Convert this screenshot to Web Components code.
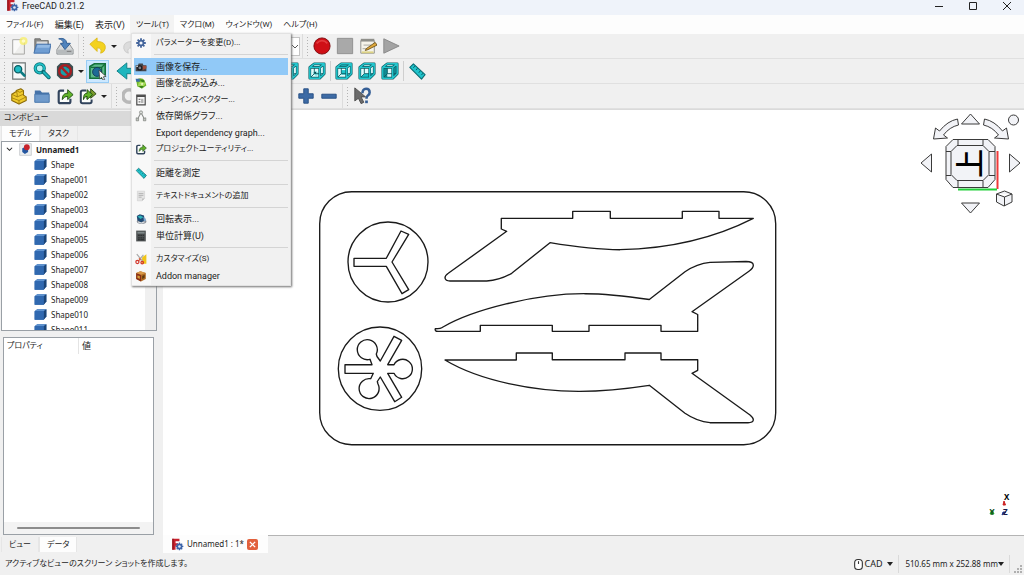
<!DOCTYPE html>
<html lang="ja">
<head>
<meta charset="utf-8">
<meta name="viewport" content="width=device-width, initial-scale=1">
<title>FreeCAD 0.21.2</title>
<style>
  html, body { margin: 0; height: 100%; }
  body {
    font-family: Roboto, "Noto Sans CJK JP", sans-serif;
    font-size: 9px; line-height: 12px; color: #1c1c1c;
    font-feature-settings: "palt"; background: #f0f0f0; overflow: hidden;
  }
</style>
</head>
<body>
<fc-window>
  <fc-titlebar slot="title">FreeCAD 0.21.2</fc-titlebar>

  <fc-menubar slot="menubar">
    <fc-menu label="ファイル(F)" kana></fc-menu>
    <fc-menu label="編集(E)"></fc-menu>
    <fc-menu label="表示(V)"></fc-menu>
    <fc-menu label="ツール(T)" kana open>
      <fc-menu-item icon="gear" kana>パラメーターを変更(D)...</fc-menu-item>
      <fc-menu-sep></fc-menu-sep>
      <fc-menu-item icon="camera" active>画像を保存...</fc-menu-item>
      <fc-menu-item icon="loadimage">画像を読み込み...</fc-menu-item>
      <fc-menu-item icon="scene" kana>シーンインスペクター...</fc-menu-item>
      <fc-menu-item icon="graph">依存関係グラフ...</fc-menu-item>
      <fc-menu-item>Export dependency graph...</fc-menu-item>
      <fc-menu-item icon="link" kana>プロジェクトユーティリティ...</fc-menu-item>
      <fc-menu-sep></fc-menu-sep>
      <fc-menu-item icon="ruler">距離を測定</fc-menu-item>
      <fc-menu-sep></fc-menu-sep>
      <fc-menu-item icon="textdoc" kana>テキストドキュメントの追加</fc-menu-item>
      <fc-menu-sep></fc-menu-sep>
      <fc-menu-item icon="turntable">回転表示...</fc-menu-item>
      <fc-menu-item icon="calc">単位計算(U)</fc-menu-item>
      <fc-menu-sep></fc-menu-sep>
      <fc-menu-item icon="customize" kana>カスタマイズ(S)</fc-menu-item>
      <fc-menu-item icon="addon">Addon manager</fc-menu-item>
    </fc-menu>
    <fc-menu label="マクロ(M)" kana></fc-menu>
    <fc-menu label="ウィンドウ(W)" kana></fc-menu>
    <fc-menu label="ヘルプ(H)" kana></fc-menu>
  </fc-menubar>

  <fc-toolrow slot="toolbars">
    <fc-toolbar>
      <fc-tool icon="new"></fc-tool><fc-tool icon="open"></fc-tool><fc-tool icon="save"></fc-tool>
    </fc-toolbar>
    <fc-toolbar>
      <fc-tool icon="undo" drop></fc-tool><fc-tool icon="redo" drop></fc-tool>
    </fc-toolbar>
    <fc-toolbar><fc-workbench></fc-workbench></fc-toolbar>
    <fc-toolbar last>
      <fc-tool icon="record"></fc-tool><fc-tool icon="stop"></fc-tool><fc-tool icon="macro"></fc-tool><fc-tool icon="play"></fc-tool>
    </fc-toolbar>
  </fc-toolrow>
  <fc-toolrow slot="toolbars">
    <fc-toolbar last>
      <fc-tool icon="fit"></fc-tool><fc-tool icon="zoom"></fc-tool><fc-tool icon="nodraw" drop></fc-tool><fc-tool icon="bbox" checked></fc-tool>
      <fc-tool-sep></fc-tool-sep>
      <fc-tool icon="back"></fc-tool><fc-tool icon="forward"></fc-tool><fc-tool icon="link"></fc-tool>
      <fc-tool-sep></fc-tool-sep>
      <fc-tool icon="cubeFront"></fc-tool><fc-tool icon="cubeTop"></fc-tool><fc-tool icon="cubeRight"></fc-tool><fc-tool icon="cubeFront"></fc-tool>
      <fc-tool icon="cubeFront"></fc-tool><fc-tool-sep></fc-tool-sep><fc-tool icon="cubeIso"></fc-tool>
      <fc-tool-sep line></fc-tool-sep>
      <fc-tool icon="cubeTop"></fc-tool><fc-tool icon="cubeBottom"></fc-tool><fc-tool icon="cubeRight"></fc-tool>
      <fc-tool-sep line></fc-tool-sep>
      <fc-tool icon="ruler"></fc-tool>
    </fc-toolbar>
  </fc-toolrow>
  <fc-toolrow slot="toolbars">
    <fc-toolbar>
      <fc-tool icon="part"></fc-tool><fc-tool icon="folder"></fc-tool><fc-tool icon="link"></fc-tool><fc-tool icon="links" drop></fc-tool>
    </fc-toolbar>
    <fc-toolbar>
      <fc-tool icon="ring"></fc-tool><fc-tool icon="ring"></fc-tool><fc-tool icon="ring" drop></fc-tool><fc-tool icon="ring"></fc-tool><fc-tool icon="ring"></fc-tool><fc-tool icon="ring"></fc-tool><fc-tool icon="ring"></fc-tool>
      <fc-tool-sep></fc-tool-sep>
      <fc-tool icon="plus"></fc-tool><fc-tool icon="minus"></fc-tool>
    </fc-toolbar>
    <fc-toolbar last><fc-tool icon="whats"></fc-tool></fc-toolbar>
  </fc-toolrow>

  <fc-combo-view slot="side"></fc-combo-view>
  <fc-viewport slot="main"></fc-viewport>
  <fc-statusbar slot="status">アクティブなビューのスクリーン ショットを作成します。</fc-statusbar>
</fc-window>

<script>
const K = '#0c5c63';
/* Wireframe cube with one face filled. */
const cube = face => {
  const faces = {
    front: '<path d="M3 7h10v11H3z" fill="#1cc3ca"/>',
    top: '<path d="M2 6l5-4h11l-5 4z" fill="#1cc3ca"/><path d="M7 9h5v5H7z" fill="#1cc3ca"/>',
    right: '<path d="M13 6l5-4v11l-5 5z" fill="#128c93"/><path d="M2 6h5v11H2z" fill="#128c93"/>',
    bottom: '<path d="M2 18l5-5h11l-5 5z" fill="#1cc3ca"/>',
    iso: '<path d="M5 12l4-2 4 3-4 3z" fill="#8feaec"/><circle cx="8" cy="12" r="1.200" fill="#0b4a50"/>'
  };
  const edges = 'M2 6l5-4h11v11l-5 5H2zM2 6h11v12M13 6l5-4';
  return `<path d="M2 6l5-4h11v11l-5 5H2z" fill="#e2fbfb"/>${faces[face]}
    <path d="M7 6v7H13M7 13l-4 4M13 13h4" fill="none" stroke="${K}" stroke-width="1"/>
    <path d="${edges}" fill="none" stroke="${K}" stroke-width="3" stroke-linejoin="round"/>
    <path d="${edges}" fill="none" stroke="#22c6cd" stroke-width="1.600" stroke-linejoin="round"/>`;
};
const ICONS = {
  app: '<path d="M2 1h11v4H7v3h4v4H7v6H2z" fill="#c8202c"/><path d="M2 1h2v17H2z" fill="#8e121c"/><g fill="#3c64a8"><circle cx="13" cy="13" r="4.6"/><path d="M12 7h2v12h-2zM7 12h12v2H7z"/><path d="M12 7h2v12h-2zM7 12h12v2H7z" transform="rotate(45 13 13)"/></g><circle cx="13" cy="13" r="2" fill="#dfe8f6"/>',
  gear: '<g fill="#44659c"><circle cx="10" cy="10" r="5.500"/><path d="M8.500 2h3v16h-3zM2 8.500h16v3H2z"/><path d="M8.500 2h3v16h-3zM2 8.500h16v3H2z" transform="rotate(45 10 10)"/></g><circle cx="10" cy="10" r="2.600" fill="#f4f6fa"/>',
  camera: '<path d="M1 7h4l1-3h7l1 3h5v10H1z" fill="#43454a"/><circle cx="8" cy="11.500" r="4.500" fill="#1c1d20"/><circle cx="8" cy="11.500" r="2.200" fill="#7a828f"/><path d="M13 8h6v4l-6 3z" fill="#a14f3c"/><path d="M2 8h3v2H2z" fill="#c9c9c9"/>',
  loadimage: '<path d="M2 6q4-6 11-3l3 3 3 8-7 5-8-3z" fill="#6fb52a"/><path d="M6 9l9-3 3 5-5 6-8-2z" fill="#a5d957"/><path d="M1 3h7v5H2z" fill="#3c6ea8"/><path d="M8 4l7 1 1 4-5-1z" fill="#37801a"/><path d="M6 15l9 0-4 4z" fill="#37801a"/><path d="M9 11l5-1-2 4z" fill="#eef9cf"/>',
  scene: '<path d="M3 2h14v16H3z" fill="#f6f6f6" stroke="#4a4a4a" stroke-width="2"/><path d="M3 2h14v3H3z" fill="#4a4a4a"/><path d="M6 8h3v2H6zM6 12h3v2H6z" fill="#777"/><path d="M10 8h4v7h-4z" fill="#b5b5b5"/>',
  graph: '<path d="M10 4L4 16M10 4l6 12" stroke="#8a8d8a" stroke-width="1.800"/><circle cx="10" cy="4" r="2.600" fill="#dcdedb" stroke="#6d706c"/><path d="M2 13l4 1v4H2zM14 14l4-1v5h-4z" fill="#c4c7c2" stroke="#6d706c"/>',
  link: '<path d="M9 4H5Q3 4 3 6v10q0 2 2 2h9q2 0 2-2v-3" fill="#fbfdfb" stroke="#31435c" stroke-width="2.400"/><path d="M7 14c0-5 2-7 6-7V3l6 5.500L13 14v-3.500c-3 0-4 1-6 3.500z" fill="#62b52b" stroke="#1c4a10" stroke-width="1"/>',
  links: '<path d="M8 4H4Q2 4 2 6v10q0 2 2 2h8q2 0 2-2v-2" fill="#fbfdfb" stroke="#31435c" stroke-width="2.200"/><path d="M9 13c0-5 1-7 4-7V2l6 5.500-6 5v-3c-2 0-3 1-4 3.500z" fill="#7a9a2b" stroke="#24440f"/><path d="M5 14c0-5 1-7 4-7V3l6 5.500L9 14v-3.500c-2 0-3 1-4 3.500z" fill="#62b52b" stroke="#1c4a10"/>',
  ruler: '<path d="M2 6l4-4 13 12-4 5z" fill="#1fc3cb" stroke="#0a6b72" stroke-width="1.200" stroke-linejoin="round"/><path d="M7.500 4.500L6 6.500M10.500 7L9 9M13.500 10l-1.500 2M16.500 12.500l-1.500 2" stroke="#0a565c" stroke-width="1"/>',
  textdoc: '<path d="M4 2h12v12l-4 4H4z" fill="#e4e4e4" stroke="#cfcfcf"/><path d="M6 6h8M6 9h8M6 12h5" stroke="#a9a9a9" stroke-width="1.300"/><path d="M12 18v-4h4z" fill="#b9b9b9"/>',
  turntable: '<ellipse cx="11" cy="14" rx="8" ry="4" fill="#8a9099"/><path d="M3 5l5-3 7 2 1 8-6 4-6-4z" fill="#204a73"/><path d="M4 6l5-2 5 3-5 3z" fill="#2fb3bb"/><path d="M14 7q5 1 4 6l-3 1z" fill="#7fa7cf"/><path d="M5 15q6 3 11 0" stroke="#e9edf2" stroke-width="1.500" fill="none"/>',
  calc: '<path d="M2 1h16v18H2z" fill="#4d5152"/><path d="M4 3h12v3H4z" fill="#7f8889"/><path d="M5 8h3v2H5zM9 8h3v2H9zM13 8h2v2h-2zM5 12h3v2H5zM9 12h3v2H9zM13 12h2v2h-2zM5 15h3v2H5zM9 15h6v2H9z" fill="#303334"/>',
  customize: '<path d="M12 7l7-5v16h-8z" fill="#f0c419"/><path d="M3 2l10 12M14 3L5 14" stroke="#a8a8a8" stroke-width="2"/><circle cx="4" cy="15" r="2.600" fill="none" stroke="#d3352a" stroke-width="2"/><circle cx="12" cy="16" r="2.200" fill="none" stroke="#d3352a" stroke-width="2"/><path d="M6 8l4 2-2 4z" fill="#e4572e"/>',
  addon: '<path d="M2 5l7-3 9 3v10l-8 4-8-4z" fill="#b06a22"/><path d="M2 5l8 3v11l-8-4z" fill="#8b2f16"/><path d="M2 5l7-3 9 3-8 3z" fill="#d99a4a"/><path d="M4 9l4 1v5l-4-2z" fill="#d8a13b"/><path d="M12 10l4-2v5l-4 2z" fill="#5f3a12"/>',
  new: '<path d="M3 3h13v16H3z" fill="#efefed" stroke="#a2a29e"/><path d="M4 4h11L5 18H4z" fill="#fafaf9"/><circle cx="15" cy="4.500" r="4.500" fill="#f8ef6a" opacity=".8"/><circle cx="15" cy="4.500" r="2" fill="#fffbc8"/>',
  open: '<path d="M2 17V2h6l1 2h8v6z" fill="#8a8a88" stroke="#6d6d6b"/><path d="M4 5h12v6H4z" fill="#dcdcdc"/><path d="M4 8h16l-2 10H1z" fill="#6f9dd2" stroke="#3f6ea8"/><path d="M5 9h14l-1 3H4z" fill="#93bae4"/>',
  save: '<path d="M5 8h10l4 6v5H1v-5z" fill="#d8dadb" stroke="#868a8c"/><path d="M2 14h16v4H2z" fill="#b6babc"/><path d="M3 2q8-2 9 5h4l-6 7-5-7h3q0-4-5-5z" fill="#4f83bd" stroke="#2d5a91"/><path d="M12 16h5" stroke="#777"/>',
  undo: '<path d="M1 8l8-7v4q10 0 9 8-1 4-5 5 2-6-4-6v4z" fill="#f3d21f" stroke="#dcb91a"/>',
  redo: '<path d="M19 8l-8-7v4Q1 5 2 13q1 4 5 5-2-6 4-6v4z" fill="#dcdcdc" stroke="#cacaca"/>',
  record: '<circle cx="10" cy="10" r="9" fill="#cf0f16" stroke="#7d070b" stroke-width="1"/><path d="M4 7q6-6 12 0" stroke="#e23a3e" fill="none" stroke-width="2"/>',
  stop: '<path d="M1.500 1.500h17v17h-17z" fill="#a9a9a9" stroke="#8c8c8c"/>',
  macro: '<path d="M2 4h15v14H2z" fill="#f5f3ea" stroke="#8b8b86"/><path d="M2 2h15v3H2z" fill="#8f8f8a"/><path d="M5 9h9M4 13h8" stroke="#a4a49c"/><path d="M8 13l10-7 2 3-10 5-3 1z" fill="#e1a93a" stroke="#6e5218"/><path d="M3 16h13v2H3z" fill="#dcd284"/>',
  play: '<path d="M2 2l17 8-17 8z" fill="#a3a3a3" stroke="#868686"/>',
  fit: '<path d="M3 1h14v18H3z" fill="#f7f9f9" stroke="#6f7676" stroke-width="1.300"/><circle cx="9" cy="8" r="4" fill="#21bcc4" stroke="#0b5d63" stroke-width="1.500"/><path d="M12 11l4 4" stroke="#0d7b82" stroke-width="3" stroke-linecap="round"/>',
  zoom: '<circle cx="7.500" cy="7" r="5" fill="#bdf0f1" stroke="#0b7379" stroke-width="3.600"/><circle cx="7.500" cy="7" r="5" fill="none" stroke="#1fc0c7" stroke-width="2"/><path d="M11.500 11l6 6" stroke="#0b656b" stroke-width="4.200" stroke-linecap="round"/><path d="M12 11.500l5.500 5.500" stroke="#1cb5bd" stroke-width="2.400" stroke-linecap="round"/>',
  nodraw: '<path d="M5 1h10l4 4v10l-4 4H5l-4-4V5z" fill="#3a4f52"/><path d="M5 8l5-3 5 3v5l-5 3-5-3z" fill="#17a0a8"/><circle cx="10" cy="10" r="6.500" fill="none" stroke="#a81e22" stroke-width="2.600"/><path d="M5.500 5.500l9 9" stroke="#a81e22" stroke-width="2.600"/>',
  bbox: '<path d="M1 5l5-3h12v12l-4 4H1z" fill="#5cba8c" stroke="#12703a" stroke-width="1.800"/><path d="M2 6h12v12M14 6l4-4" stroke="#12703a" fill="none" stroke-width="1.500"/><circle cx="9" cy="11" r="5" fill="#1d6a96" stroke="#123a5c"/><path d="M11 9l8 7-3 .5 1.500 3-2 .5-1.500-3-2 2z" fill="#f5f5f5" stroke="#333" stroke-width=".8"/>',
  back: '<path d="M1 10l11-9v6h8v6h-8v6z" fill="#1fb6be" stroke="#0a7c82"/>',
  forward: '<path d="M19 10L8 1v6H0v6h8v6z" fill="#1fb6be" stroke="#0a7c82"/>',
  cubeFront: cube('front'), cubeTop: cube('top'), cubeRight: cube('right'), cubeBottom: cube('bottom'), cubeIso: cube('iso'),
  part: '<path d="M2 8l5-3v-1l5-2 3 2v5l3 2v4l-8 4-8-4z" fill="#f0cb2c" stroke="#8a6a08" stroke-width="1.200" stroke-linejoin="round"/><path d="M2 8l6 3 7-3M10 19v-4l8-4M2 12l8 3M8 11V8l-1-4 4 2 4-2" fill="none" stroke="#a3800e" stroke-width="1"/>',
  folder: '<path d="M2 4h6l2 2h8v11H2z" fill="#4572a8"/><path d="M2 8h16v9H2z" fill="#6f9acb" stroke="#4a78ae"/>',
  ring: '<circle cx="8" cy="10" r="7" fill="none" stroke="#b8b8b8" stroke-width="4"/>',
  plus: '<path d="M7.500 2h5v5.500H18v5h-5.500V18h-5v-5.500H2v-5h5.500z" fill="#3d6ba5" stroke="#244d82"/>',
  minus: '<path d="M2 8h16v4.500H2z" fill="#3d6ba5" stroke="#244d82"/>',
  whats: '<path d="M2 1l12 10H9l3 6-3 1.500-3-6-4 3z" fill="#6b6b6b" stroke="#4c4c4c"/><path d="M10.500 7q0-5 4-5t4 4q0 2-2 3.500-1.500 1-1.500 3.500" fill="none" stroke="#365f96" stroke-width="2.800"/><path d="M13.500 15h3v3h-3z" fill="#365f96"/>',
  doc: '<path d="M1 1h18v18H1z" fill="#eceef0" stroke="#b8bcc0"/><path d="M5 8l5-2 4 2v6l-5 3-4-3z" fill="#2457a0"/><circle cx="12" cy="6.500" r="4.500" fill="#c8242c"/>',
  box: '<path d="M1 5l4-3h14v11l-4 5H1z" fill="#2a5fa3"/><path d="M1 5l4-3h14l-4 3z" fill="#5f93cf"/><path d="M15 5l4-3v11l-4 5z" fill="#1b4577"/><path d="M1 5h14v13H1z" fill="#3069b0"/>',
  mouse: '<rect x="3" y="1" width="14" height="18" rx="6" fill="#fff" stroke="#333" stroke-width="2"/><path d="M10 4v5" stroke="#333" stroke-width="2"/>'
};

/* Base class: each element renders its template into an open shadow root. */
class Base extends HTMLElement {
  constructor() { super(); this.attachShadow({ mode: 'open' }); }
  connectedCallback() {
    const t = document.createElement('template');
    t.innerHTML = `<style>*,:host{box-sizing:border-box}:host([kana]){font-size:8px}button{font:inherit;color:inherit;background:none;border:0;padding:0;margin:0;white-space:nowrap;text-align:left;font-feature-settings:inherit}${this.css()}</style>${this.html()}`;
    this.shadowRoot.replaceChildren(t.content.cloneNode(true));
  }
  a(n) { return this.getAttribute(n) || ''; }
}
const def = (name, css, html) => customElements.define(name, class extends Base {
  css() { return css; }
  html() { return typeof html === 'function' ? html(this) : html; }
});

def('fc-icon', ':host{display:block;width:var(--icon,18px);height:var(--icon,18px);flex:none}svg{display:block;width:100%;height:100%}',
  e => `<svg viewBox="0 0 20 20" aria-hidden="true">${ICONS[e.a('name')] || ''}</svg>`);

def('fc-window', `
  :host{display:grid;height:100vh;grid-template:auto auto auto minmax(0,1fr) 22px / 157px minmax(0,1fr);column-gap:6px}
  .title,.menus,.tools,.status{grid-column:1/-1;min-width:0}
  .menus{position:relative;z-index:2}
  .tools{border-bottom:1px solid #dadada}
  .side,.main{min-height:0;min-width:0;display:grid}`,
  `<header class="title"><slot name="title"></slot></header>
   <nav class="menus"><slot name="menubar"></slot></nav>
   <div class="tools"><slot name="toolbars"></slot></div>
   <aside class="side"><slot name="side"></slot></aside>
   <main class="main"><slot name="main"></slot></main>
   <footer class="status"><slot name="status"></slot></footer>`);

def('fc-titlebar', `
  :host{display:flex;align-items:center;height:15px;background:#eff3fa;padding:0 0 4px 6px;--icon:13px}
  span{flex:1;padding-left:3px}
  button{width:34px;height:11px;display:grid;place-items:center}
  svg{width:10px;height:10px;fill:none;stroke:#222}`,
  `<fc-icon name="app"></fc-icon><span><slot></slot></span>
   <button aria-label="最小化"><svg viewBox="0 0 10 10"><path d="M1 5.500h8"/></svg></button>
   <button aria-label="最大化"><svg viewBox="0 0 10 10"><path d="M1.500 1.500h7v7h-7z"/></svg></button>
   <button aria-label="閉じる"><svg viewBox="0 0 10 10"><path d="M1 1l8 8M9 1l-8 8"/></svg></button>`);

def('fc-menubar', ':host{display:flex;height:19px;background:#fdfdfd}', '<slot></slot>');

def('fc-menu', `
  :host{display:block;position:relative}
  button{height:19px;padding:0 5px 0 6px;display:block}
  :host([open]) button{background:#f3f3f3}
  .popup{position:absolute;top:18px;left:1px;width:160px;height:253px;display:flex;flex-direction:column;font-size:9px;
    background:linear-gradient(90deg,#f8f8f8 19px,#f1f1f1 19px);border:1px solid #e2e2e2;padding:1px 2px;box-shadow:1px 1px 2px #707070}`,
  e => `<button aria-haspopup="menu">${e.a('label')}</button>${e.hasAttribute('open') ? '<div class="popup" role="menu"><slot></slot></div>' : ''}`);

def('fc-menu-item', `
  :host{display:flex;flex:1;min-height:0;font-size:9px;--icon:12px}
  button{flex:1;display:flex;align-items:center}
  .ico{width:22px;padding-left:1px;flex:none}
  :host([active]){background:#91c9f7}`,
  e => `<button role="menuitem"><span class="ico">${e.a('icon') ? `<fc-icon name="${e.a('icon')}"></fc-icon>` : ''}</span><span><slot></slot></span></button>`);

def('fc-menu-sep', ':host{display:block;flex:none;height:7px;padding:3px 0 0 20px}i{display:block;height:1px;background:#d4d4d4}', '<i></i>');

def('fc-toolrow', ':host{display:flex;height:25px;background:#f0f0f0;border-bottom:1px solid #e0e0e0}', '<slot></slot>');

def('fc-toolbar', `
  :host{display:flex;align-items:center;padding-right:2px;border-right:1px solid #dcdcdc}
  :host([last]){border-right:0}
  .grip{width:3px;height:20px;margin:0 1px 0 3px;flex:none;background:radial-gradient(circle,#b4b4b4 1px,transparent 1px) 0 0/3px 3px}`,
  '<span class="grip"></span><slot></slot>');

def('fc-tool', `
  :host{display:flex;align-items:center;flex:none}
  .b{width:23px;height:23px;display:grid;place-items:center}
  :host([checked]) .b{background:#cce8ff;border:1px solid #99cdf5}
  .d{width:10px;height:23px;display:grid;place-items:center}
  .d i{border:3px solid transparent;border-top-color:#222;border-bottom:0}`,
  e => `<button class="b" aria-label="${e.a('icon')}"><fc-icon name="${e.a('icon')}"></fc-icon></button>${e.hasAttribute('drop') ? '<button class="d" aria-label="menu"><i></i></button>' : ''}`);

def('fc-tool-sep', ':host{display:block;width:4px;height:20px;flex:none}:host([line]){background:linear-gradient(#cfcfcf,#cfcfcf) center/1px 100% no-repeat}', '');

def('fc-workbench', `
  :host{display:block;position:relative;width:138px;height:19px}
  select{appearance:none;width:100%;height:100%;background:#fff;border:1px solid #c4c4c4;border-radius:0;display:block}
  svg{position:absolute;right:1px;top:6px;width:8px;height:8px;fill:none;stroke:#555;pointer-events:none}`,
  '<select aria-label="ワークベンチ"><option></option></select><svg viewBox="0 0 8 8"><path d="M1 2l3 3 3-3"/></svg>');

def('fc-tabs', `
  :host{display:flex;height:15px;padding-left:1px;font-size:8px}
  button{padding:0 7px;height:15px;line-height:14px;min-width:38px;text-align:center;background:#f0f0f0;border:1px solid #e6e6e6;border-width:0 1px}
  button[aria-selected=true]{background:#fdfdfd}`,
  e => e.a('labels').split(',').map((l, i) => `<button role="tab" aria-selected="${i == e.a('selected')}">${l}</button>`).join(''));

def('fc-tree', `
  :host{display:block;height:190px;margin:0 0 0 1px;border:1px solid #9aa0a6;background:#fff;overflow:hidden;position:relative;font-family:"Noto Sans",sans-serif}
  ul{list-style:none;margin:0;padding:0}
  ul ul{padding:0 0 0 32px}
  .row{display:flex;align-items:center;height:15px;gap:4px;font-size:8px;--icon:13px}
  .root{font-weight:700;font-size:8px;padding-left:4px}
  svg{width:7px;height:7px;fill:none;stroke:#222;stroke-width:1.200;margin-right:2px}
  .bar{position:absolute;top:0;right:0;width:11px;height:100%;background:#f0f0f0}`,
  () => `<ul role="tree"><li role="treeitem"><div class="row root"><svg viewBox="0 0 8 8"><path d="M1 2l3 3 3-3"/></svg><fc-icon name="doc"></fc-icon><span>Unnamed1</span></div>
   <ul role="group">${Array.from({ length: 12 }, (_, i) => `<li role="treeitem" class="row"><fc-icon name="box"></fc-icon><span>Shape${i ? String(i).padStart(3, '0') : ''}</span></li>`).join('')}</ul></li></ul><div class="bar"></div>`);

def('fc-properties', `
  :host{display:flex;flex-direction:column;flex:1;min-height:0;margin:6px 3px 2px 3px;border:1px solid #9aa0a6;background:#fff}
  table{border-collapse:collapse;width:100%;table-layout:fixed}
  th{font-weight:400;font-size:8px;text-align:left;padding:0 3px;height:16px;vertical-align:middle}
  th+th{font-size:9px;border-left:1px solid #e4e4e4}
  .fill{flex:1}
  .bar{height:12px;background:#f3f3f3;display:flex;align-items:center;padding:0 13px}
  .bar i{flex:1;height:2px;background:#8c8c8c;border-radius:1px}`,
  `<table><thead><tr><th>プロパティ</th><th>値</th></tr></thead></table><div class="fill"></div><div class="bar"><i></i></div>`);

def('fc-combo-view', `
  :host{display:flex;flex-direction:column;min-height:0;padding-bottom:1px}
  h2{margin:1px 0 0;font:inherit;font-size:8px;height:15px;line-height:14px;padding-left:4px;background:#d9d9d9;flex:none}
  fc-tabs{flex:none}fc-tree{flex:none}`,
  `<h2>コンボビュー</h2><fc-tabs labels="モデル,タスク" selected="0"></fc-tabs><fc-tree></fc-tree>
   <fc-properties></fc-properties><fc-tabs labels="ビュー,データ" selected="1"></fc-tabs>`);

def('fc-navcube', `
  :host{display:block;position:absolute;top:0;right:0;width:106px;height:106px}
  svg{display:block;width:100%;height:100%}
  text{font:500 29px "Noto Sans CJK JP",sans-serif}`,
  `<svg viewBox="918 110 106 106" fill="#f2f3f7" stroke="#3a3a3a" stroke-width="1">
    <path d="M970.500 114l9 10h-18zM970.500 213l9-10h-18zM921 163l10.500-9v18zM1020 163l-10.500-9v18z"/>
    <path d="M933.500 139l2-11 4 3q8-10 18-12l1 6q-9 2-15 10l4 3zM1008.500 139l-2-11-4 3q-8-10-18-12l-1 6q9 2 15 10l-4 3z"/>
    <circle cx="1013.500" cy="120" r="5"/>
    <path d="M953 139.500h35l7 7v33l-7 8h-35l-7-8v-33z"/>
    <path d="M957 145.500h26l6 6v23l-6 6h-26l-6-6v-23zM958 139.500v6M983 139.500v6M958 180.500v7M983 180.500v7M946 151.500h5M946 175.500h5M989 151.500h6M989 175.500h6"/>
    <path d="M997.500 151v38" stroke="#f03a3a" stroke-width="2"/><path d="M958 189.500h39" stroke="#22d03a" stroke-width="2"/>
    <path d="M996.500 194l8-3 7.500 3v8l-8 4-7.500-4zM996.500 194l8 3 7.500-3M1004.500 197v9"/>
    <text transform="translate(981 178) rotate(-90)" fill="#000" stroke="none">上</text>
  </svg>`);

def('fc-axes', `
  :host{display:block;position:absolute;right:10px;bottom:16px;width:26px;height:30px}
  svg{display:block;width:100%;height:100%}
  text{font:700 8px "Noto Sans",sans-serif}`,
  `<svg viewBox="988 490 26 30">
    <path d="M1003 506l1-4 1.500 4z" fill="#c22" stroke="#c22"/><path d="M990 515l2-4 2 4z" fill="#1a9a2a" stroke="#1a9a2a"/><path d="M1002 516l1-3 3 0z" fill="#224" stroke="#223a9a"/>
    <text x="1004" y="501">X</text><text x="989.500" y="516" fill="#164a1a">Y</text><text x="1003" y="516" fill="#1a1a4a">Z</text>
  </svg>`);

def('fc-drawing', ':host{display:block;min-height:0;min-width:0}svg{display:block;width:100%;height:100%}',
  `<svg viewBox="163 110 861 425" fill="none" stroke="#1a1a1a" stroke-width="1.350" stroke-linejoin="round" role="img">
    <rect x="319.700" y="191.700" width="456" height="253" rx="32"/>
    <circle cx="388" cy="262" r="40"/>
    <path d="M354 258.300H386.300L401 231 408.700 234.300 392 262 408.700 289.700 402 293.700 386.300 266.300H354z"/>
    <circle cx="380" cy="368.700" r="41.700"/>
    <path d="M345 364.700H372L370 359.300A10 10 0 1 1 376.300 354L377 356.500 380.300 361 394 336.300 401.700 340.300 387.700 364.700H394A9.700 9.700 0 1 1 394 373.300H387.700L401.700 397.300 394.700 401.700 380.300 377 377.300 381.500 378 384A10 10 0 1 1 370.700 378.700L373.300 373.300H345z"/>
    <path d="M501.300 218.300V229L506.700 231.300 448.300 273.300Q445 275.500 445 278 445.500 281 450 281H486.700Q500 280 511.700 273.300L550 242.700Q592 249.700 620 249.700 695 248 753.300 218.300H719V211.300H682.300V218.300H610.300V211.300H572.700V218.300z"/>
    <path d="M435.300 328.700Q434.500 331.300 438 331.300H480.300V325.300H552.300V331.300H589V325.300H661V331.300H697.700V314.500L692 311.700 749.300 271Q753.500 268 753.300 265 753 261.500 746 261.500L710 262.300Q697 263.500 685 271.700L649.300 299.500Q610 293.700 585 293.700C535 293.500 472 310 443 327Q441 328.700 435.300 328.700z"/>
    <path d="M445 360H516.300V353H552.300V359.700H625V353H661V359.700H697.700V370.300L692 373.300 750 415Q753.500 418 753.300 420 753 422.700 748 422.700H710Q697 421.500 685 413.300L649.300 385.300Q610 391.300 580 391.300C535 391.500 480 381 445 360z"/>
  </svg>`);

def('fc-viewport', `
  :host{display:grid;grid-template-rows:minmax(0,1fr) 17px;min-height:0}
  .scene{position:relative;display:grid;min-height:0;background:#fff;border-bottom:1px solid #b4b4b4}
  .tabs{display:flex}
  .tab{display:flex;align-items:center;gap:3px;background:#fdfdfd;padding:0 10px 0 8px;margin-top:-1px;z-index:1;font:8px/12px "Noto Sans",sans-serif;--icon:13px}
  .close{width:11px;height:11px;background:#e2603c;border-radius:2px;display:grid;place-items:center}
  .close svg{width:7px;height:7px;stroke:#fff;stroke-width:1.600;display:block}`,
  `<div class="scene"><fc-drawing></fc-drawing><fc-navcube></fc-navcube><fc-axes></fc-axes></div>
   <div class="tabs"><div class="tab"><fc-icon name="app"></fc-icon><button role="tab">Unnamed1 : 1*</button>
   <button class="close" aria-label="閉じる"><svg viewBox="0 0 8 8"><path d="M1 1l6 6M7 1l-6 6"/></svg></button></div></div>`);

def('fc-statusbar', `
  :host{display:flex;align-items:center;height:22px;padding:0 2px 0 5px;font-size:8px;--icon:11px}
  .msg{flex:1}
  .cell{display:flex;align-items:center;height:18px;padding:0 5px 0 6px;border-right:1px solid #dadada;font:8px/12px "Noto Sans",sans-serif}
  .cad span{font-size:9px}
  i{border:3px solid transparent;border-top:4px solid #222;border-bottom:0}
  .cad i{margin-left:5px}
  .grip{width:12px;height:18px;display:flex;align-items:flex-end;justify-content:flex-end}
  .grip svg{width:8px;height:8px;fill:#b0b0b0}`,
  `<span class="msg"><slot></slot></span>
   <button class="cell cad"><fc-icon name="mouse"></fc-icon><span>CAD</span><i></i></button>
   <button class="cell dims"><span>510.65 mm x 252.88 mm</span><i></i></button>
   <span class="grip"><svg viewBox="0 0 8 8"><path d="M6 0h2v2H6zM6 3h2v2H6zM3 3h2v2H3zM6 6h2v2H6zM3 6h2v2H3zM0 6h2v2H0z"/></svg></span>`);
</script>
</body>
</html>
